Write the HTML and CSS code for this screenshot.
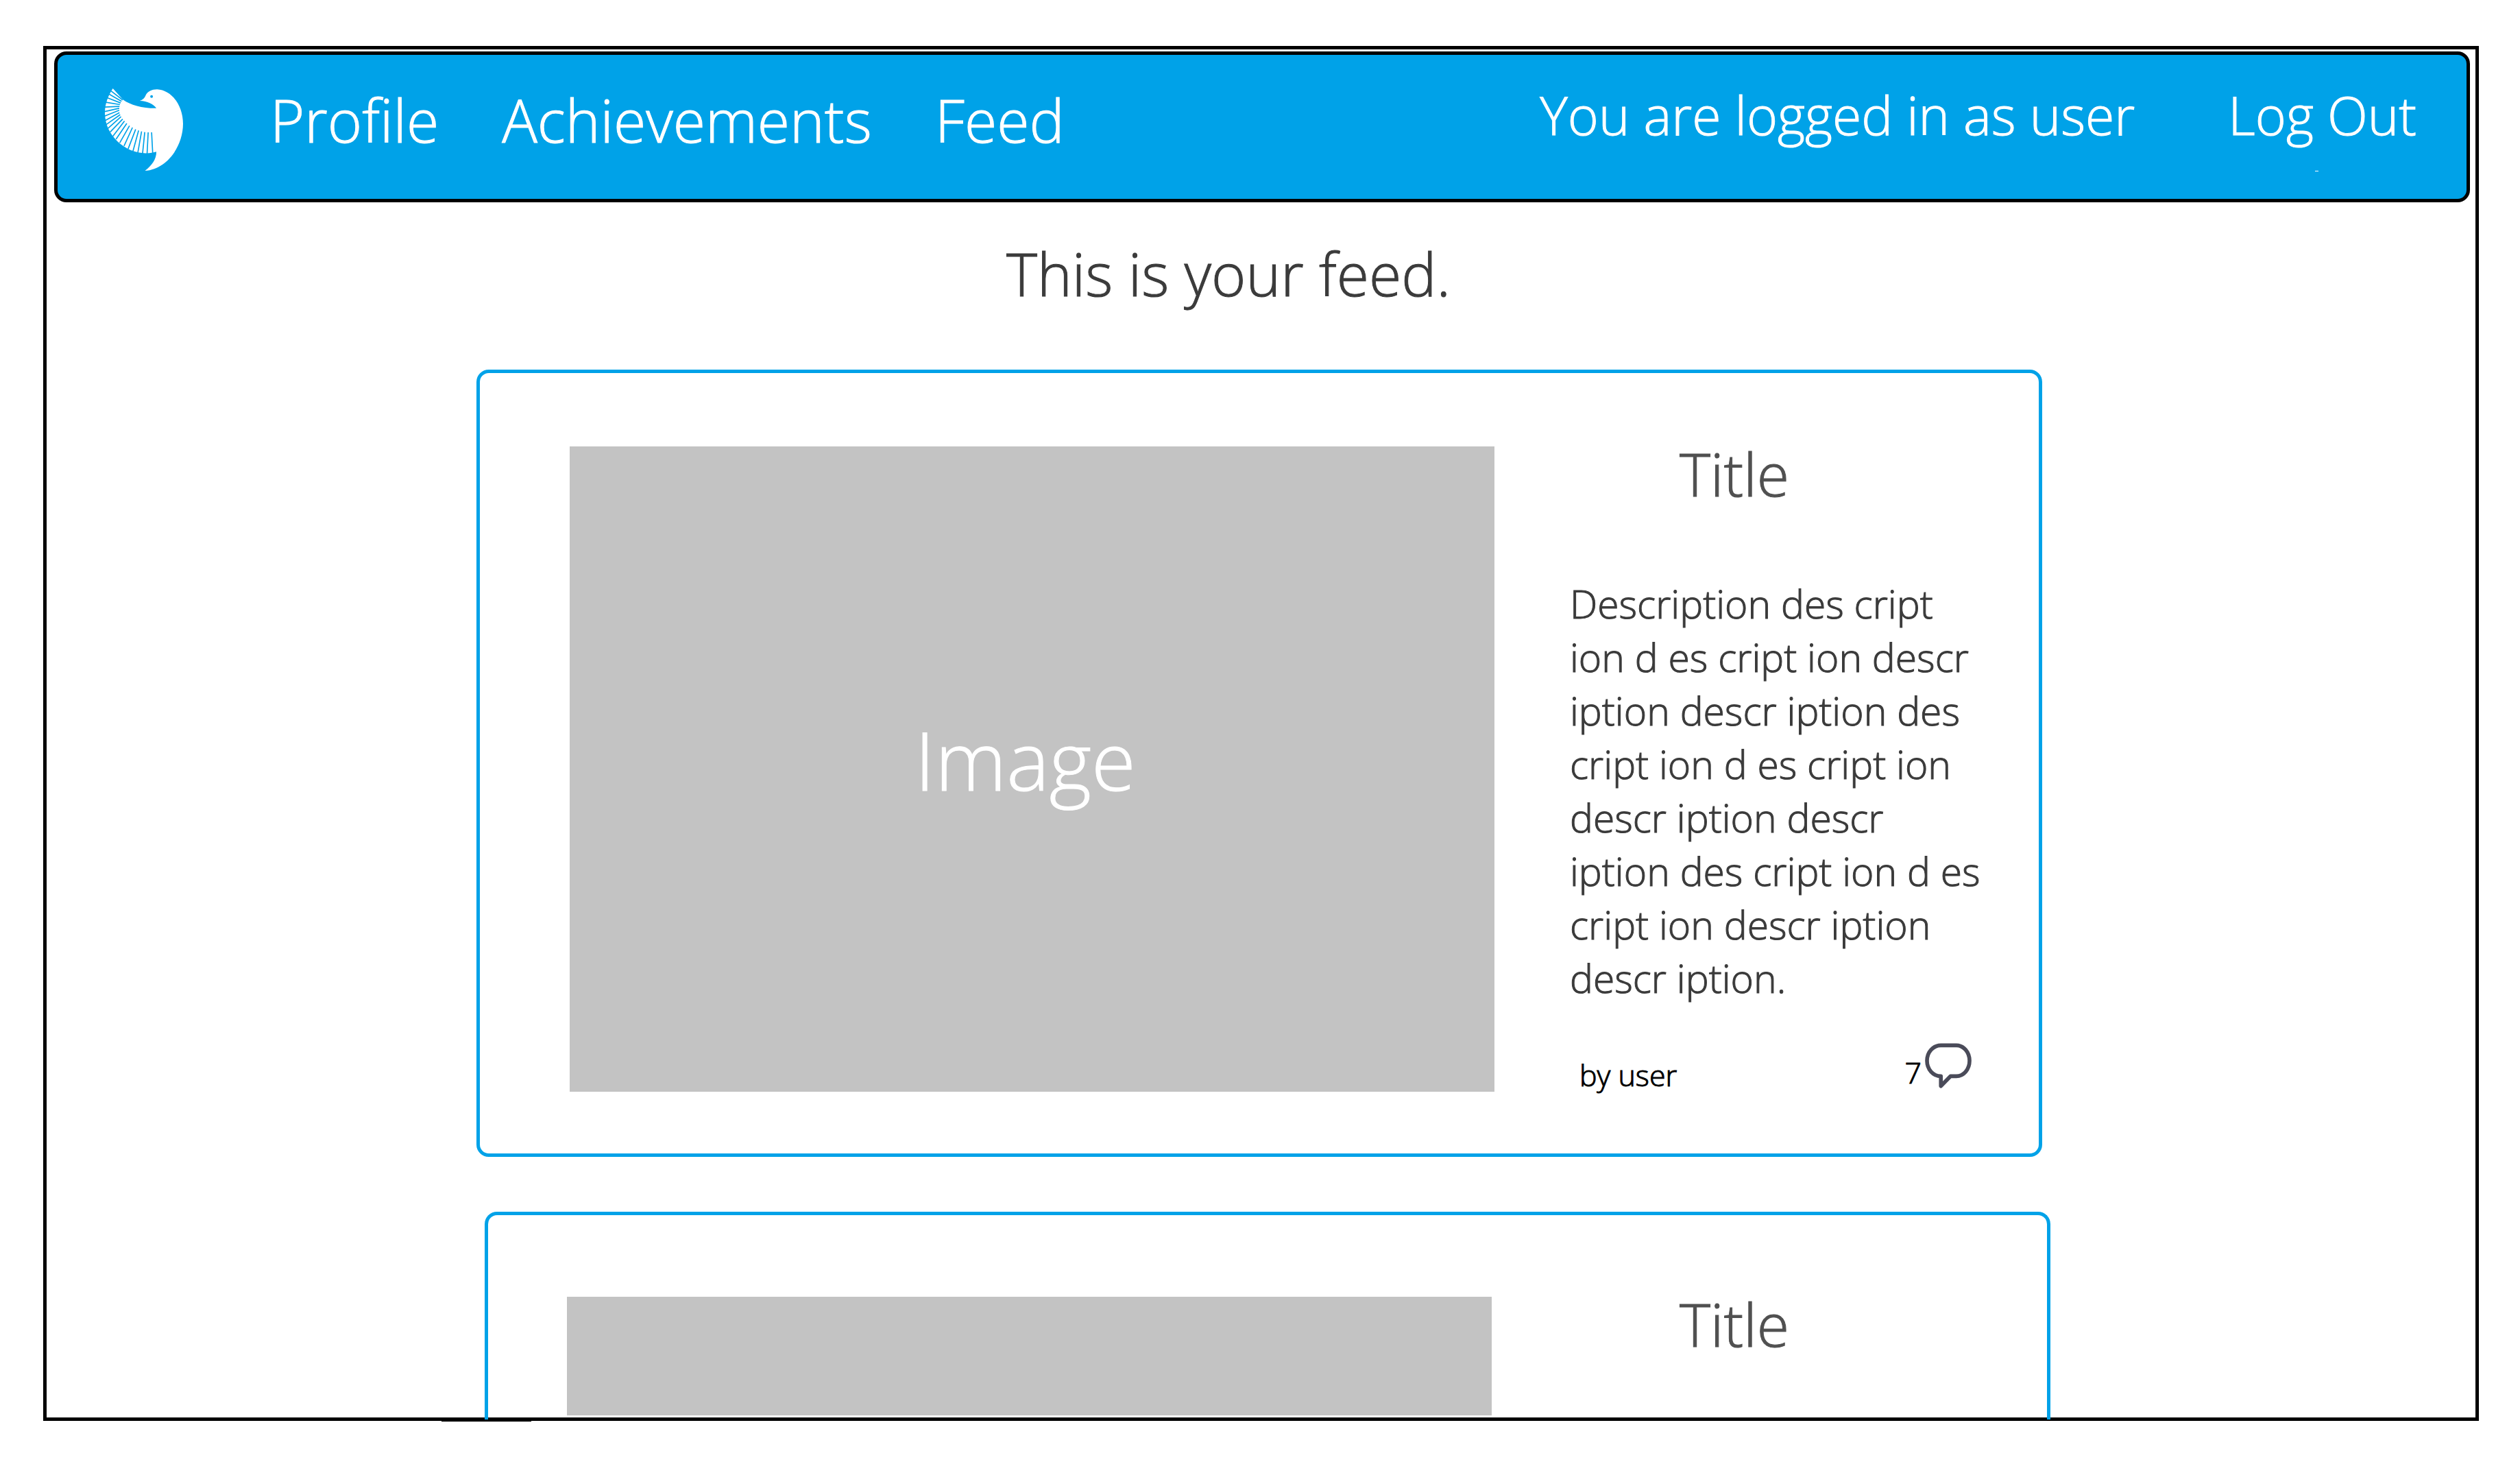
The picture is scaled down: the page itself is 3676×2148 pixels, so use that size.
FILE: index.html
```html
<!DOCTYPE html>
<html lang="en">
<head>
<meta charset="utf-8">
<title>Feed</title>
<link rel="stylesheet" href="styles.css">
</head>
<body>
<div class="frame">
  <header class="navbar">
    <a class="logo" href="#" aria-label="Home">
      <svg class="logo-art" viewBox="68 58 343 358" preserveAspectRatio="none" aria-hidden="true">
        <path class="bird" d="M103 58L148 107C180 130 235 145 294 144C280 126 255 113 221 112Q241 104 246 90C255 70 275 62 297 62C360 65 411 130 411 212C411 310 340 410 244 416C275 392 294 365 294 333L278 337C180 357 68 275 68 165C68 125 82 90 103 58Z"/>
        <circle class="eye" cx="273" cy="93" r="6"/>
        <path class="gaps" d="M95 69L146 108M85 82L141 114M78 98L137 121M72 118L134 128M66 139L132 136M64 159L131 144M65 179L131 153M68 198L132 163M74 215L135 172M81 232L139 181M91 248L146 191M103 266L154 200M117 279L164 210M133 295L176 220M152 308L189 228M170 321L203 236M191 332L216 241M212 340L229 245M233 345L243 248M253 346L258 249M278 342L273 249"/>
      </svg>
    </a>
    <nav class="links">
      <a href="#">Profile</a>
      <a href="#">Achievements</a>
      <a href="#">Feed</a>
    </nav>
    <div class="account">
      <span>You are logged in as user</span>
      <a class="logout" href="#">Log Out</a>
    </div>
  </header>

  <main class="feed">
    <h1 class="feed-title">This is your feed.</h1>

    <article class="card">
      <div class="thumb">Image</div>
      <div class="info">
        <h2 class="card-title">Title</h2>
        <p class="description">Description des cript ion d es cript ion descr iption descr iption des cript ion d es cript ion descr iption descr iption des cript ion d es cript ion descr iption descr iption.</p>
        <div class="meta">
          <span class="author">by user</span>
          <a class="comments" href="#" aria-label="7 comments">
            <span class="count">7</span>
            <svg class="bubble" viewBox="320 65 205 197" aria-hidden="true">
              <path d="M390 74H458C490 74 516 104 516 142C516 180 490 210 458 210H432L390 253V210C356 210 329 180 329 142C329 104 356 74 390 74Z"/>
            </svg>
          </a>
        </div>
      </div>
    </article>

    <article class="card card-next">
      <div class="thumb"></div>
      <div class="info">
        <h2 class="card-title">Title</h2>
      </div>
    </article>
  </main>
</div>
</body>
</html>
```
FILE: styles.css
```css
* {
  box-sizing: border-box;
}

body {
  margin: 0;
  padding: 67px 60px 76px 63px;
  height: 100vh;
  display: flex;
  background: #fff;
  color: #3b3b3b;
  font-family: "Open Sans", "Noto Sans", sans-serif;
  font-weight: 300;
  -webkit-text-stroke: 1px currentColor;
}

a {
  color: inherit;
  text-decoration: none;
}

h1,
h2,
p {
  margin: 0;
  font-weight: 300;
}

.frame {
  position: relative;
  flex: 1;
  min-width: 0;
  display: flex;
  flex-direction: column;
  border: 5px solid #000;
}

/* thicker stretch of the bottom rule */
.frame::after {
  content: "";
  position: absolute;
  left: 576px;
  bottom: -6px;
  width: 131px;
  height: 1px;
  background: #000;
}

.navbar {
  position: relative;
  display: flex;
  align-items: flex-start;
  margin: 3px 8px 0 11px;
  padding: 36px 73px 41px 69px;
  border: 5px solid #000;
  border-radius: 18px;
  background: #00a2e8;
  color: #fff;
  line-height: 100px;
}

.navbar::after {
  content: "";
  position: absolute;
  right: 216px;
  bottom: 40px;
  width: 5px;
  height: 1px;
  background: #fff;
}

.logo {
  display: flex;
  margin-top: 13px;
}

.logo-art {
  width: 114px;
  height: 120px;
}

.bird {
  fill: #fff;
}

.eye {
  fill: #00a2e8;
}

.gaps {
  fill: none;
  stroke: #00a2e8;
  stroke-width: 5;
}

.links {
  display: flex;
  gap: 92px;
  margin: 9px 0 0 127px;
  font-size: 86px;
}

.account {
  display: flex;
  gap: 136px;
  margin: 2px 0 0 auto;
  font-size: 77px;
}

.feed {
  flex: 1;
  min-height: 0;
  display: flex;
  flex-direction: column;
  margin-bottom: -3px;
  padding: 0 17.84% 0 17.7%;
  position: relative;
}

.feed-title {
  padding: 54px 90px 90px 0;
  font-size: 86px;
  line-height: 100px;
  text-align: center;
}

.card {
  display: grid;
  grid-template-columns: 1349fr 606fr;
  column-gap: 110px;
  padding: 107px 78px 90px 131px;
  border: 5px solid #00a2e8;
  border-radius: 18px;
}

.card-next {
  flex: 1;
  min-height: 0;
  margin: 80px -12px 0 12px;
  column-gap: 114px;
  padding: 119px 90px 6px 115px;
  border-bottom: 0;
  border-radius: 18px 18px 0 0;
  overflow: hidden;
}

.thumb {
  display: flex;
  align-items: center;
  justify-content: center;
  padding: 0 20px 28px 0;
  background: #c3c3c3;
  color: #fff;
  font-size: 118px;
}

.info {
  display: flex;
  flex-direction: column;
  min-height: 0;
}

.card-title {
  padding: 0 0 110px 160px;
  color: #505050;
  font-size: 86px;
  line-height: 80px;
}

.description {
  padding-bottom: 56px;
  font-size: 57px;
  line-height: 78px;
}

.meta {
  display: flex;
  justify-content: space-between;
  padding: 0 20px 0 14px;
  color: #000;
  font-size: 43px;
}

.author {
  padding-top: 23px;
  line-height: 48px;
}

.comments {
  display: flex;
  align-items: flex-start;
  gap: 5px;
}

.count {
  padding-top: 20px;
  line-height: 46px;
}

.bubble {
  width: 68px;
  height: 66px;
  fill: none;
  stroke: #4a4b59;
  stroke-width: 17;
  stroke-linejoin: round;
}
```
